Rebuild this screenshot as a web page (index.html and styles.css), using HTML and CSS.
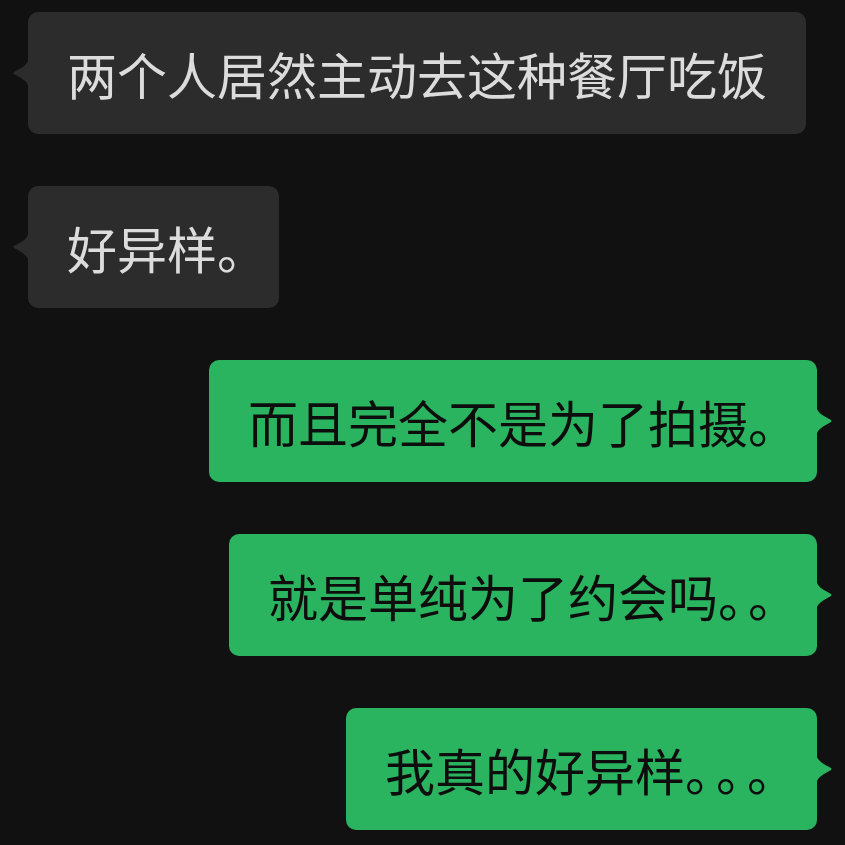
FILE: index.html
```html
<!DOCTYPE html>
<html lang="zh-CN">
<head>
<meta charset="UTF-8">
<meta name="viewport" content="width=device-width, initial-scale=1.0">
<title>聊天记录</title>
<link rel="stylesheet" href="styles.css">
</head>
<body>
<div class="chat">
  <div class="row in">
    <div class="bubble">两个人居然主动去这种餐厅吃饭</div>
  </div>
  <div class="row in">
    <div class="bubble">好异样<span class="p tight">。</span></div>
  </div>
  <div class="row out">
    <div class="bubble">而且完全不是为了拍摄<span class="p">。</span></div>
  </div>
  <div class="row out">
    <div class="bubble">就是单纯为了约会吗<span class="p">。。</span></div>
  </div>
  <div class="row out">
    <div class="bubble">我真的好异样<span class="p wide">。。。</span></div>
  </div>
</div>
</body>
</html>
```

FILE: styles.css
```css
/* dark chat screen */
body {
    margin: 0;
    background: #111111;
    font-family: "Noto Sans CJK SC", "Noto Sans", sans-serif;
}
.chat {
    display: flex;
    flex-direction: column;
    gap: 52px;
    padding: 12px 28px;
}
.row {
    display: flex;
}
.row.out {
    justify-content: flex-end;
}
.bubble {
    position: relative;
    padding: 26px 39px;
    font-size: 50px;
    line-height: 70px;
    border-radius: 10px;
    white-space: nowrap;
    text-spacing-trim: space-all;
}
.in .bubble {
    background: #2c2c2c;
    color: #dcdcdc;
}
.out .bubble {
    background: #2bb460;
    color: #0d0d0d;
}
/* full stops sit tighter than full-width glyphs */
.p {
    letter-spacing: -20px;
}
.p.tight {
    letter-spacing: -27px;
}
.p.wide {
    letter-spacing: -19px;
}
/* little tail on the side of each bubble */
.bubble::before {
    content: "";
    position: absolute;
    top: 44px;
    width: 16px;
    height: 34px;
    background: inherit;
}
.in .bubble::before {
    left: -15px;
    clip-path: path('M16 0 C16 9 8 12 1 16 Q0 17 1 18 C8 22 16 25 16 34 Z');
}
.out .bubble::before {
    right: -15px;
    clip-path: path('M0 0 C0 9 8 12 15 16 Q16 17 15 18 C8 22 0 25 0 34 Z');
}
```
